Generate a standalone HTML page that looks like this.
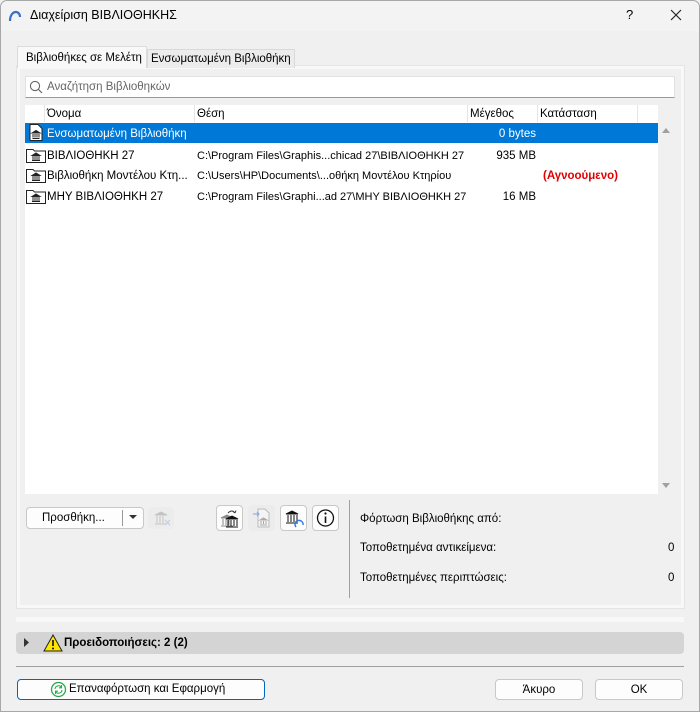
<!DOCTYPE html>
<html><head><meta charset="utf-8"><style>
*{box-sizing:border-box;margin:0;padding:0}
body{width:700px;height:712px;overflow:hidden;background:#f0f0f0;font-family:"Liberation Sans","DejaVu Sans",sans-serif;font-size:11.5px;color:#000;position:relative}
.a{position:absolute}
.win{left:0;top:0;width:700px;height:712px;border:1px solid #a8a8a8;border-radius:7px 7px 0 0}
.title{left:1px;top:1px;width:698px;height:30px;background:#f3f3f3;border-radius:7px 7px 0 0}
.btn{background:#fdfdfd;border:1px solid #c8c8c8;border-radius:4px;text-align:center}
.row{left:25px;width:633px;height:20px;line-height:23px}
.row span{position:absolute;white-space:nowrap}
.row span.p{font-size:11px}
.ico{position:absolute;left:2px;top:2px}
</style></head><body>
<div class="a win"></div>
<div class="a title"></div>
<svg class="a" style="left:8px;top:10px" width="14" height="12"><path d="M2 11 C2 5 5 2 8 2 C10 2 12 4 12 7" stroke="#3a6fc9" stroke-width="2.2" fill="none"/></svg>
<div class="a" style="left:30px;top:8px;font-size:12.5px">Διαχείριση ΒΙΒΛΙΟΘΗΚΗΣ</div>
<div class="a" style="left:626px;top:7px;font-size:13px">?</div>
<svg class="a" style="left:670px;top:9px" width="12" height="12"><path d="M1 1L11 11M11 1L1 11" stroke="#222" stroke-width="1.2"/></svg>

<div class="a" style="left:17px;top:66px;width:667px;height:542px;background:#f0f0f0;border:3px solid #f8f8f8;outline:1px solid #e4e4e4"></div>
<div class="a" style="left:17px;top:46px;width:130px;height:22px;background:#f8f8f8;border:1px solid #dcdcdc;border-bottom:none;padding:5px 0 0 8px">Βιβλιοθήκες σε Μελέτη</div>
<div class="a" style="left:147px;top:49px;width:148px;height:19px;background:#ececec;border:1px solid #d9d9d9;border-bottom:none;padding:3px 0 0 3px">Ενσωματωμένη Βιβλιοθήκη</div>

<div class="a" style="left:25px;top:76px;width:650px;height:22px;background:#fff;border:1px solid #e2e2e2;border-bottom:1px solid #999"></div>
<svg class="a" style="left:29px;top:80px" width="14" height="14"><circle cx="6" cy="6" r="4.6" stroke="#666" fill="none" stroke-width="1.1"/><path d="M9.5 9.5L13 13" stroke="#666" stroke-width="1.2"/></svg>
<div class="a" style="left:47px;top:81px;color:#666">Αναζήτηση Βιβλιοθηκών</div>

<div class="a" style="left:25px;top:105px;width:650px;height:389px;background:#fff"></div>
<div class="a" style="left:658px;top:105px;width:17px;height:389px;background:#f0f0f0"></div>
<svg class="a" style="left:661px;top:126px" width="10" height="8"><path d="M1 7L5 2L9 7Z" fill="#a0a0a0"/></svg>
<svg class="a" style="left:661px;top:482px" width="10" height="8"><path d="M1 1L5 6L9 1Z" fill="#a0a0a0"/></svg>
<div class="a" style="left:44px;top:105px;width:1px;height:17px;background:#e5e5e5"></div>
<div class="a" style="left:194px;top:105px;width:1px;height:17px;background:#e5e5e5"></div>
<div class="a" style="left:467px;top:105px;width:1px;height:17px;background:#e5e5e5"></div>
<div class="a" style="left:537px;top:105px;width:1px;height:17px;background:#e5e5e5"></div>
<div class="a" style="left:637px;top:105px;width:1px;height:17px;background:#e5e5e5"></div>
<div class="a" style="left:47px;top:108px">Όνομα</div>
<div class="a" style="left:197px;top:108px">Θέση</div>
<div class="a" style="left:470px;top:108px">Μέγεθος</div>
<div class="a" style="left:540px;top:108px">Κατάσταση</div>

<div class="a row" style="top:123px;background:#0078d7;color:#fff">
<svg class="ico" width="14" height="17" style="left:4px;top:1px"><path d="M1 .5H9L13 4.5V16.5H1Z" fill="#fff" stroke="#222"/><path d="M3 9L7 6.5L11 9ZM3.5 14.5H10.5M4 10V13.5M6 10V13.5M8 10V13.5M10 10V13.5" stroke="#222" fill="#222"/></svg>
<span style="left:22px">Ενσωματωμένη Βιβλιοθήκη</span><span style="right:122px">0 bytes</span></div>
<div class="a row" style="top:145px">
<svg class="ico" width="20" height="16" style="left:1px"><path d="M.5 2.5H7L8.5 4H19.5V15.5H.5Z" fill="#fff" stroke="#222"/><path d="M6 8.5L10 6L14 8.5ZM6 13.5H14M7 9V13M9 9V13M11 9V13M13 9V13" stroke="#222" fill="#222"/></svg>
<span style="left:22px">ΒΙΒΛΙΟΘΗΚΗ 27</span><span class="p" style="left:172px">C:\Program Files\Graphis...chicad 27\ΒΙΒΛΙΟΘΗΚΗ 27</span><span style="right:122px">935 MB</span></div>
<div class="a row" style="top:165px">
<svg class="ico" width="20" height="16" style="left:1px"><path d="M.5 2.5H7L8.5 4H19.5V15.5H.5Z" fill="#fff" stroke="#222"/><path d="M6 8.5L10 6L14 8.5ZM6 13.5H14M7 9V13M9 9V13M11 9V13M13 9V13" stroke="#222" fill="#222"/></svg>
<span style="left:22px">Βιβλιοθήκη Μοντέλου Κτη...</span><span class="p" style="left:172px">C:\Users\HP\Documents\...οθήκη Μοντέλου Κτηρίου</span><span style="left:518px;color:#e00000;font-weight:bold">(Αγνοούμενο)</span></div>
<div class="a row" style="top:186px">
<svg class="ico" width="20" height="16" style="left:1px"><path d="M.5 2.5H7L8.5 4H19.5V15.5H.5Z" fill="#fff" stroke="#222"/><path d="M6 8.5L10 6L14 8.5ZM6 13.5H14M7 9V13M9 9V13M11 9V13M13 9V13" stroke="#222" fill="#222"/></svg>
<span style="left:22px">ΜΗΥ ΒΙΒΛΙΟΘΗΚΗ 27</span><span class="p" style="left:172px">C:\Program Files\Graphi...ad 27\ΜΗΥ ΒΙΒΛΙΟΘΗΚΗ 27</span><span style="right:122px">16 MB</span></div>

<div class="a btn" style="left:26px;top:507px;width:118px;height:22px"></div>
<div class="a" style="left:42px;top:512px">Προσθήκη...</div>
<div class="a" style="left:122px;top:510px;width:1px;height:16px;background:#999"></div>
<svg class="a" style="left:129px;top:515px" width="9" height="5"><path d="M0 0H8L4 4Z" fill="#333"/></svg>
<div class="a" style="left:148px;top:507px;width:26px;height:22px;background:#ececec;border-radius:4px"></div>
<svg class="a" style="left:152px;top:510px" width="20" height="16"><path d="M3 5L9 2L15 5ZM3 14H14M5 6V13M8 6V13M11 6V13" stroke="#c4c4c4" fill="#c4c4c4"/><path d="M13 10L18 15M18 10L13 15" stroke="#b9cde4"/></svg>
<div class="a btn" style="left:216px;top:505px;width:27px;height:26px"></div>
<svg class="a" style="left:219px;top:508px" width="22" height="20"><path d="M9 5Q13 1 16 5M16 5L14 3.5M16 5L17 2.5" stroke="#333" fill="none"/><path d="M2 10L8 7L14 10ZM2 18H14M4 11V17M7 11V17M10 11V17" stroke="#888" fill="#888"/><path d="M7 11L13 8L19 11ZM7 19H19M9 12V18M12 12V18M15 12V18M18 12V18" stroke="#111" fill="#111"/></svg>
<div class="a" style="left:248px;top:505px;width:27px;height:26px;background:#ececec;border-radius:4px"></div>
<svg class="a" style="left:251px;top:508px" width="22" height="20"><path d="M7 1H14L18 5V19H7Z" fill="#f4f4f4" stroke="#bbb"/><path d="M9 12L12.5 10L16 12ZM9 17H16M10 13V16M12.5 13V16M15 13V16" stroke="#aaa" fill="#aaa"/><path d="M2 6H8M6 4L8 6L6 8" stroke="#7aa7e0" fill="none"/></svg>
<div class="a btn" style="left:280px;top:505px;width:27px;height:26px"></div>
<svg class="a" style="left:283px;top:508px" width="22" height="20"><path d="M3 6L9 3L15 6ZM3 15H15M5 7V14M8 7V14M11 7V14M14 7V14" stroke="#111" fill="#111"/><path d="M13 19A4 4 0 1 1 20 17" stroke="#2c7be5" stroke-width="1.4" fill="none"/></svg>
<div class="a btn" style="left:312px;top:505px;width:27px;height:26px"></div>
<svg class="a" style="left:315px;top:508px" width="22" height="20"><circle cx="10.5" cy="10" r="8" stroke="#111" stroke-width="1.3" fill="none"/><path d="M10.5 8.5V15" stroke="#111" stroke-width="1.6"/><circle cx="10.5" cy="5.5" r="1.1" fill="#111"/></svg>
<div class="a" style="left:349px;top:500px;width:1px;height:98px;background:#a0a0a0"></div>
<div class="a" style="left:360px;top:513px">Φόρτωση Βιβλιοθήκης από:</div>
<div class="a" style="left:360px;top:542px">Τοποθετημένα αντικείμενα:</div>
<div class="a" style="left:668px;top:542px">0</div>
<div class="a" style="left:360px;top:572px">Τοποθετημένες περιπτώσεις:</div>
<div class="a" style="left:668px;top:572px">0</div>

<div class="a" style="left:16px;top:617px;width:668px;height:5px;background:#f8f8f8"></div>
<div class="a" style="left:16px;top:632px;width:668px;height:22px;background:#d4d4d4;border-radius:4px"></div>
<svg class="a" style="left:24px;top:638px" width="6" height="9"><path d="M0 0L5 4.5L0 9Z" fill="#333"/></svg>
<svg class="a" style="left:43px;top:634px" width="20" height="18"><path d="M10 1L19 17H1Z" fill="#ffe600" stroke="#222"/><path d="M10 6V12" stroke="#111" stroke-width="1.6"/><circle cx="10" cy="14.5" r="1" fill="#111"/></svg>
<div class="a" style="left:64px;top:637px;font-weight:bold">Προειδοποιήσεις: 2 (2)</div>
<div class="a" style="left:16px;top:666px;width:668px;height:1px;background:#a0a0a0"></div>

<div class="a btn" style="left:17px;top:679px;width:248px;height:21px;border-color:#0067c0"></div>
<svg class="a" style="left:50px;top:681px" width="17" height="17"><circle cx="8.5" cy="8.5" r="7" fill="#fff" stroke="#2aa84a" stroke-width="1.3"/><path d="M5 8A3.5 3.5 0 0 1 11.5 6.5M12 9A3.5 3.5 0 0 1 5.5 10.5M11.5 4V6.8H9M5.5 13V10.2H8" stroke="#2aa84a" fill="none" stroke-width="1.1"/></svg>
<div class="a" style="left:69px;top:683px">Επαναφόρτωση και Εφαρμογή</div>
<div class="a btn" style="left:495px;top:679px;width:88px;height:21px;padding-top:4px">Άκυρο</div>
<div class="a btn" style="left:595px;top:679px;width:88px;height:21px;padding-top:4px">OK</div>
</body></html>
